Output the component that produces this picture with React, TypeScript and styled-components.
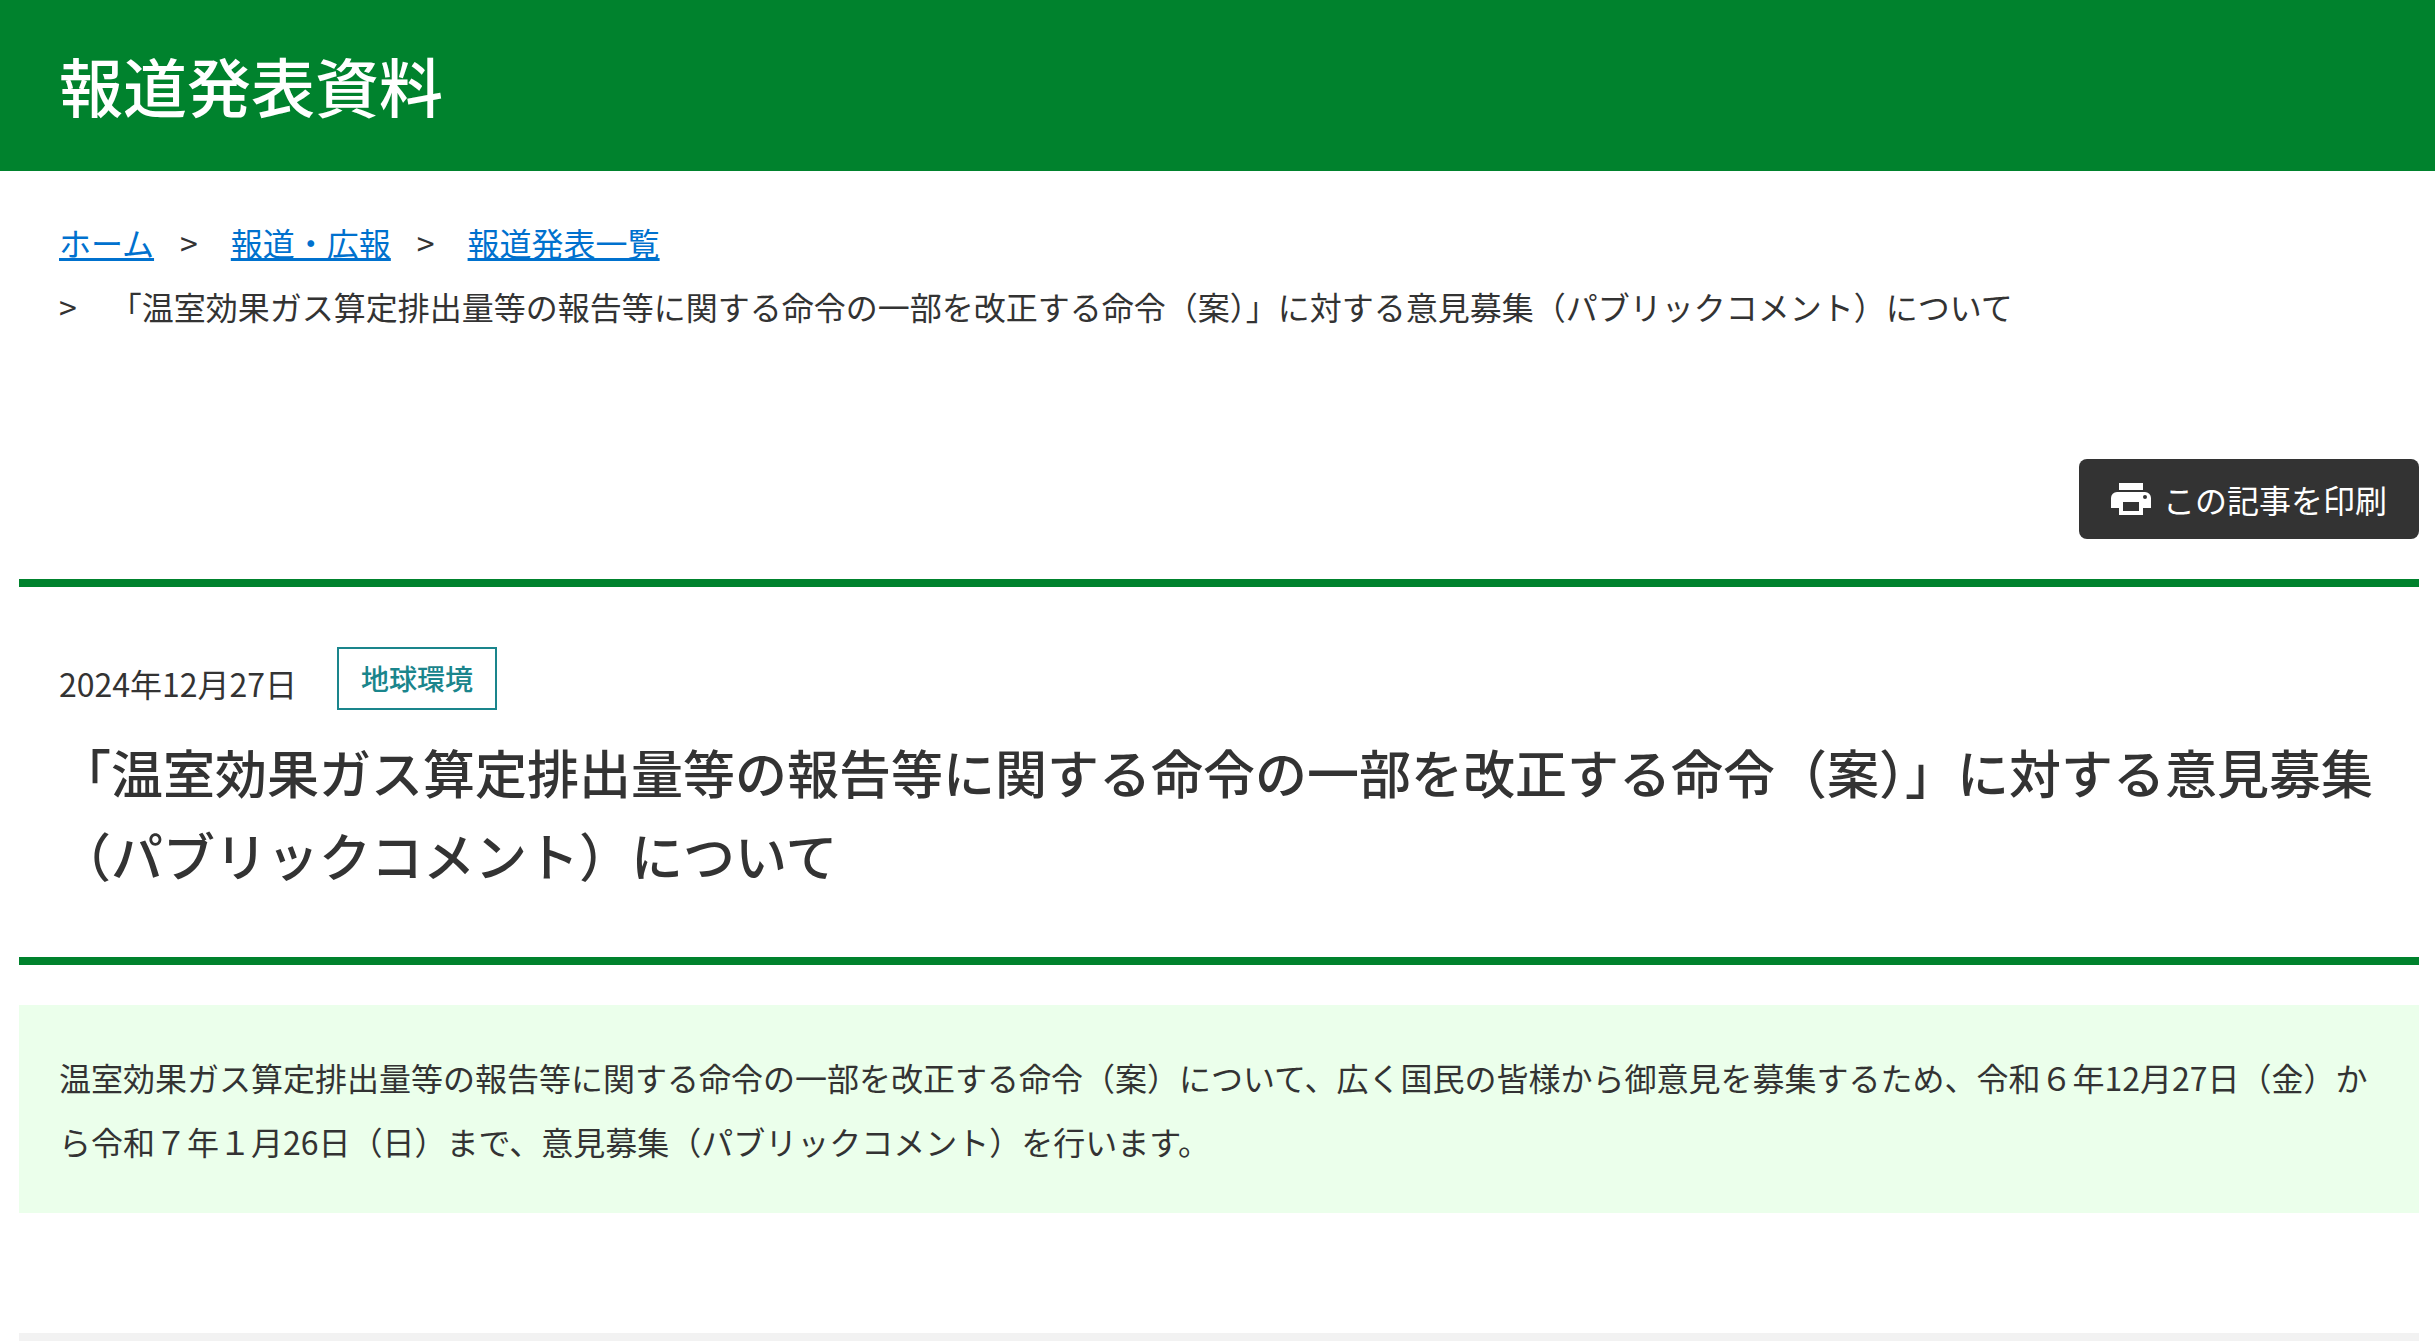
import React from "react";
import styled, { createGlobalStyle } from "styled-components";

const green = "#00822d";
const ink = "#333333";

const GlobalStyle = createGlobalStyle`
  *, *::before, *::after { box-sizing: border-box; }
  body {
    margin: 0;
    background: #ffffff;
    color: ${ink};
    font-family: "Noto Sans CJK JP", sans-serif;
    font-size: 32px;
    line-height: 64px;
  }
`;

const Banner = styled.header`
  padding: 36px 59px 39px;
  background: ${green};
  color: #ffffff;
`;

const BannerTitle = styled.p`
  margin: 0;
  font-size: 64px;
  font-weight: 500;
  line-height: 96px;
`;

const Breadcrumbs = styled.nav`
  padding: 39px 59px 0;
`;

const CrumbList = styled.ol`
  display: flex;
  flex-wrap: wrap;
  column-gap: 26px;
  margin: 0;
  padding: 0;
  list-style: none;
`;

const Crumb = styled.li`
  display: flex;
`;

const Separator = styled.span`
  flex: none;
  margin-right: 33px;
`;

const CrumbLink = styled.a`
  color: #0071ce;
  text-decoration: underline;
  text-decoration-thickness: 3px;
  text-decoration-skip-ink: none;
`;

const Main = styled.main`
  padding: 121px 16px 0 19px;
`;

const Toolbar = styled.div`
  display: flex;
  justify-content: flex-end;
  margin-bottom: 40px;
`;

const PrintButton = styled.button`
  display: flex;
  align-items: center;
  gap: 12px;
  padding: 8px 32px;
  border: 0;
  border-radius: 8px;
  background: ${ink};
  color: #ffffff;
  font: inherit;
  cursor: pointer;
`;

const ArticleHeader = styled.div`
  padding: 60px 40px 61px;
  border-top: 8px solid ${green};
  border-bottom: 8px solid ${green};
`;

const Meta = styled.div`
  display: flex;
  align-items: flex-start;
  gap: 40px;
  margin-bottom: 15px;
`;

const PublishedDate = styled.time`
  padding-top: 4px;
`;

const Tag = styled.span`
  padding: 0 22px;
  border: 2px solid #1a858c;
  color: #1a858c;
  font-size: 28px;
  font-weight: 500;
  line-height: 59px;
`;

const ArticleTitle = styled.h1`
  margin: 0;
  font-size: 52px;
  font-weight: 500;
  line-height: 83px;
`;

const Summary = styled.p`
  margin: 40px 0 120px;
  padding: 40px;
  background: #ebffeb;
`;

const Contents = styled.section`
  height: 8px;
  background: #f2f2f2;
`;

const title =
  "「温室効果ガス算定排出量等の報告等に関する命令の一部を改正する命令（案）」に対する意見募集（パブリックコメント）について";

const crumbs = ["ホーム", "報道・広報", "報道発表一覧"];

function PrintIcon() {
  return (
    <svg width="40" height="32" viewBox="0 0 40 32" fill="currentColor" aria-hidden="true">
      <path d="M8 0h24v7H8z" />
      <path
        fillRule="evenodd"
        d="M6 9h28a6 6 0 0 1 6 6v10h-8v7H8v-7H0V15a6 6 0 0 1 6-6zm6 10v9h16v-9zM34 12a2 2 0 1 0 0 4a2 2 0 1 0 0-4z"
      />
    </svg>
  );
}

export default function App() {
  return (
    <>
      <GlobalStyle />
      <Banner>
        <BannerTitle>報道発表資料</BannerTitle>
      </Banner>
      <Breadcrumbs aria-label="パンくずリスト">
        <CrumbList>
          {crumbs.map((label, index) => (
            <Crumb key={label}>
              {index > 0 && <Separator>&gt;</Separator>}
              <CrumbLink href="#">{label}</CrumbLink>
            </Crumb>
          ))}
          <Crumb aria-current="page">
            <Separator>&gt;</Separator>
            <span>{title}</span>
          </Crumb>
        </CrumbList>
      </Breadcrumbs>
      <Main>
        <Toolbar>
          <PrintButton type="button">
            <PrintIcon />
            この記事を印刷
          </PrintButton>
        </Toolbar>
        <article>
          <ArticleHeader>
            <Meta>
              <PublishedDate dateTime="2024-12-27">2024年12月27日</PublishedDate>
              <Tag>地球環境</Tag>
            </Meta>
            <ArticleTitle>{title}</ArticleTitle>
          </ArticleHeader>
          <Summary>
            温室効果ガス算定排出量等の報告等に関する命令の一部を改正する命令（案）について、広く国民の皆様から御意見を募集するため、令和６年12月27日（金）から令和７年１月26日（日）まで、意見募集（パブリックコメント）を行います。
          </Summary>
          <Contents />
        </article>
      </Main>
    </>
  );
}
